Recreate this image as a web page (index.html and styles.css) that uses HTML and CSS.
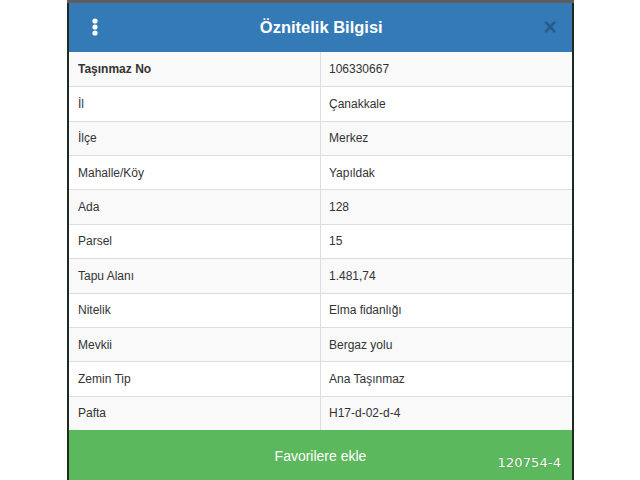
FILE: index.html
```html
<!DOCTYPE html>
<html lang="tr">
<head>
<meta charset="utf-8">
<title>Öznitelik Bilgisi</title>
<link rel="stylesheet" href="styles.css">
</head>
<body>
<div class="stage">
  <div class="modal">
    <div class="modal-header">
      <svg class="menu-icon" width="8" height="18" viewBox="0 0 8 18" aria-hidden="true">
        <circle cx="4" cy="3" r="2.6" fill="#fff"/>
        <circle cx="4" cy="9" r="2.6" fill="#fff"/>
        <circle cx="4" cy="15" r="2.6" fill="#fff"/>
      </svg>
      <h1 class="modal-title">Öznitelik Bilgisi</h1>
      <span class="close">×</span>
    </div>
    <div class="attrs">
      <div class="cell key bold stripe">Taşınmaz No</div><div class="cell val stripe">106330667</div>
      <div class="cell key">İl</div><div class="cell val">Çanakkale</div>
      <div class="cell key stripe">İlçe</div><div class="cell val stripe">Merkez</div>
      <div class="cell key">Mahalle/Köy</div><div class="cell val">Yapıldak</div>
      <div class="cell key stripe">Ada</div><div class="cell val stripe">128</div>
      <div class="cell key">Parsel</div><div class="cell val">15</div>
      <div class="cell key stripe">Tapu Alanı</div><div class="cell val stripe">1.481,74</div>
      <div class="cell key">Nitelik</div><div class="cell val">Elma fidanlığı</div>
      <div class="cell key stripe">Mevkii</div><div class="cell val stripe">Bergaz yolu</div>
      <div class="cell key">Zemin Tip</div><div class="cell val">Ana Taşınmaz</div>
      <div class="cell key stripe">Pafta</div><div class="cell val stripe">H17-d-02-d-4</div>
    </div>
    <div class="fav-btn">Favorilere ekle</div>
  </div>
  <span class="watermark">120754-4</span>
</div>
</body>
</html>
```
FILE: styles.css
```css
html, body {
  margin: 0;
  padding: 0;
  background: #ffffff;
  overflow: hidden;
  height: 480px;
}
.stage {
  position: relative;
  margin-left: 67px;
  width: 507px;
  height: 480px;
  box-sizing: border-box;
  padding: 0 2px;
  border-top: 3px solid #5e5e5e;
  background: #1e2a20;
}
.modal {
  width: 503px;
  background: #ffffff;
  font-family: "Liberation Sans", Arial, sans-serif;
  color: #333333;
}
.modal-header {
  height: 49px;
  background: #337ab7;
  display: flex;
  align-items: center;
  padding: 0 15px 0 22px;
  box-sizing: border-box;
}
.menu-icon {
  display: block;
  margin-top: -2px;
}
.modal-title {
  flex: 1;
  margin: 0;
  text-align: center;
  color: #ffffff;
  font-size: 16.5px;
  font-weight: bold;
  margin-top: -1px;
}
.close {
  font-size: 23px;
  font-weight: bold;
  line-height: 1;
  color: #000000;
  opacity: 0.24;
  margin-top: 0;
}
.attrs {
  display: grid;
  grid-template-columns: 251px 252px;
  grid-auto-rows: 34.36px;
}
.cell {
  box-sizing: border-box;
  border-top: 1px solid #dddddd;
  font-size: 12px;
  display: flex;
  align-items: center;
  background: #ffffff;
}
.cell:nth-child(1), .cell:nth-child(2) {
  border-top: none;
}
.cell.stripe {
  background: #f9f9f9;
}
.key {
  padding-left: 9px;
}
.val {
  border-left: 1px solid #dddddd;
  padding-left: 8px;
}
.bold {
  font-weight: bold;
}
.fav-btn {
  height: 52px;
  background: #5cb85c;
  color: #ffffff;
  font-size: 14px;
  display: flex;
  align-items: center;
  justify-content: center;
}
.watermark {
  position: absolute;
  right: 13px;
  top: 452px;
  font-family: "DejaVu Sans", sans-serif;
  font-size: 13px;
  color: #ffffff;
  letter-spacing: 0.1px;
  text-shadow: 0 0 1px rgba(0,0,0,0.3);
}
```
